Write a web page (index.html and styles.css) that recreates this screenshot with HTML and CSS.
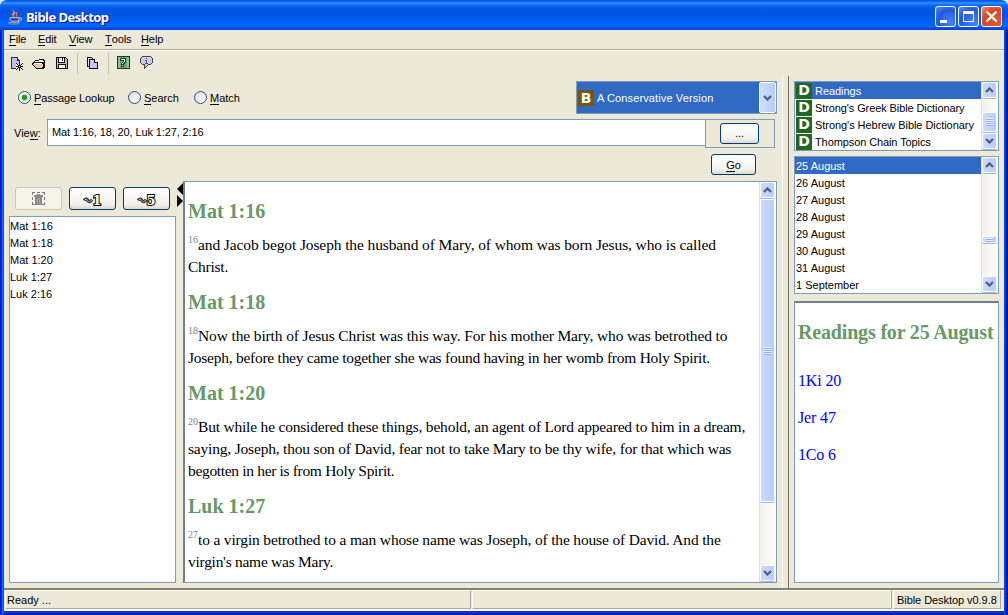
FILE: index.html
```html
<!DOCTYPE html>
<html lang="en">
<head>
<meta charset="utf-8">
<title>Bible Desktop</title>
<link rel="stylesheet" href="styles.css">
</head>
<body>
<svg class="defs" width="0" height="0">
  <symbol id="up" viewBox="0 0 9 6"><path d="M1 5 4.500 1.500 8 5" fill="none" stroke="#4d6185" stroke-width="2.300"/></symbol>
  <symbol id="down" viewBox="0 0 9 6"><path d="M1 1 4.500 4.500 8 1" fill="none" stroke="#4d6185" stroke-width="2.300"/></symbol>
</svg>
<div class="window">
  <header class="titlebar">
    <svg class="logo" width="16" height="16" viewBox="0 0 16 16"><path d="M7 8C3 5 9 4 6 1M9 8c2-2-1-3 1-5" fill="none" stroke="#f26a3c" stroke-width="1.500"/><path d="M6 6 8 3" stroke="#ffd0a8"/><path d="M3 8.500h9v2.500l-2 2H5l-2-2z" fill="#5673b4" stroke="#b5c4e8" stroke-width=".8"/><path d="M12 9h2.500v2L11 12.500" fill="none" stroke="#b5c4e8"/><path d="M1 13.500h12l-2 1.500H3z" fill="#52639e" stroke="#9fb0dd" stroke-width=".6"/><path d="M4 10.500h7" stroke="#24366e"/></svg>
    <span class="title">Bible Desktop</span>
    <div class="winbtns">
      <span class="wb"><svg width="19" height="19"><path d="M4 13h7v3H4z" fill="#fff"/></svg></span>
      <span class="wb"><svg width="19" height="19"><path d="M4.500 5.500h10v9h-10zM4 5h11" fill="none" stroke="#fff"/><path d="M4 4h11v3H4z" fill="#fff"/></svg></span>
      <span class="wb close"><svg width="19" height="19"><path d="M4.500 4.500l10 10m0-10-10 10" stroke="#fff" stroke-width="2.300"/></svg></span>
    </div>
  </header>
  <nav class="menu"><span class="m1"><u>F</u>ile</span><span class="m2"><u>E</u>dit</span><span class="m3"><u>V</u>iew</span><span class="m4"><u>T</u>ools</span><span class="m5"><u>H</u>elp</span></nav>
  <div class="toolbar">
    <svg width="150" height="24" viewBox="0 0 150 24" shape-rendering="crispEdges">
      <path d="M1 5h7l2 3v8H1z" fill="#fff"/><path d="M2 6h5v3h2v3H6v4H2z" fill="#bcc0ef"/><path d="M6 16.500H1.500V5.500H7l2.500 3V10M7.500 5.500v3h2" fill="none" stroke="#333"/><path d="M6 11h1v1h1v1h1v-3h1v3h1v-1h1v-1h1v1h-1v1h-1v1h2v1h-2v1h1v1h1v1h-1v-1h-1v-1h-1v3H9v-3H8v1H7v1H6v-1h1v-1h1v-1H6v-1h2v-1H7v-1H6z" fill="#111"/><path d="M9 14h1v1H9z" fill="#fff"/>
      <path d="M23 10h1V9h1V8h4V7h5v1h1v8h-1v1h-8v-1h-1v-1h-1v-1h-1v-1h-1z" fill="#111"/><path d="M26 9h3V8h4v1h1v1H25v-1z" fill="#fff2df"/><path d="M24 11h8v1h1v3h-1v1h-6v-1h-1v-1h-1v-1h-1v-1h1z" fill="#e7c8a8"/><path d="M24 11h8v1h-8z" fill="#fff"/>
      <path d="M46.500 5.500h9l2 2v9h-11z" fill="#b9bcc8" stroke="#111"/><path d="M49 6h5v4h-5zM48 12h8v4h-8z" fill="#fff"/><path d="M48.500 6v4.500h6V6M48.500 16v-3.500h7V16M52.500 6v3" fill="none" stroke="#111"/>
      <path d="M67.500 1v21M98.500 1v21" stroke="#c5c2b0"/>
      <path d="M77.500 5.500h4l2 2v7h-6z" fill="#d9daff" stroke="#111"/><path d="M79.500 7.500h5l3 3v6h-8z" fill="#c5c8f4" stroke="#111"/><path d="M84.500 7.500v3h3" fill="#fff" stroke="#111"/>
      <path d="M107.500 4.500h12v12h-12z" fill="#72a778" stroke="#163b20"/><path d="M108 5h2v11h-2zm9 0h2v11h-2z" fill="#93be98"/><path d="M110 6h6v5h-1v1h-1v3h-3v-4h1v-1h1V9h-3z" fill="#1b4725"/><path d="M111 7h4v3h-1v1h-1v1h-1v-1h1v-1h1V8h-3zm1 6h1v1h-1z" fill="#e3f0e3"/>
      <path d="M132.500 4.500h8l2 2v4l-2 2h-2l-4 4v-4h-2l-2-2v-4z" fill="#c9cbed" stroke="#444"/><path d="M136 6h1v1h-1zm-1 2h2v3h1v1h-3v-1h1V9h-1z" fill="#556"/>
    </svg>
  </div>
  <main class="body">
    <section class="left">
      <div class="row1">
        <i class="radio on"></i><span class="r1"><u>P</u>assage Lookup</span>
        <i class="radio"></i><span class="r2"><u>S</u>earch</span>
        <i class="radio"></i><span class="r3"><u>M</u>atch</span>
        <div class="combo"><b class="badge bible">B</b><span>A Conservative Version</span><i class="drop"><svg width="9" height="6"><use href="#down"/></svg></i></div>
      </div>
      <div class="row2"><span class="vl">Vie<u>w</u>:</span><div class="field"><span>Mat 1:16, 18, 20, Luk 1:27, 2:16</span></div><div class="more"><span class="btn dots">...</span></div></div>
      <div class="row3"><span class="btn go"><span><u>G</u>o</span></span></div>
      <div class="split">
        <aside>
          <div class="tools">
            <span class="btn off"><svg width="16" height="16" viewBox="0 0 16 16" shape-rendering="crispEdges"><path d="M1 1h3v1H2v2H1zM6 1h3v1H6zM11 1h3v3h-1V2h-2zM1 6h1v3H1zM13 6h1v3h-1zM1 11h1v2h2v1H1zM13 11h1v3h-3v-1h2z" fill="#777"/><path d="M6 3h3v1h3v2h-1v8H4V6H3V4h3z" fill="#8b8b8b"/><path d="M6 7h1v5H6zm2 0h1v5H8z" fill="#aaa"/></svg></span>
            <span class="btn"><svg width="20" height="16"><path d="M1 9.500q2.500-3 4 0t4-1" class="t1"/><path d="M1 9.500q2.500-3 4 0t4-1" class="t2"/><text x="9.500" y="13.500" class="num">1</text></svg></span>
            <span class="btn"><svg width="20" height="16"><path d="M1 9.500q2.500-3 4 0t4-1" class="t1"/><path d="M1 9.500q2.500-3 4 0t4-1" class="t2"/><text x="9.500" y="13.500" class="num">5</text></svg></span>
          </div>
          <ul class="list verses"><li>Mat 1:16</li><li>Mat 1:18</li><li>Mat 1:20</li><li>Luk 1:27</li><li>Luk 2:16</li></ul>
        </aside>
        <div class="sash"><svg width="6" height="26"><path d="M6 2v12L0 8zM0 14v12l6-6z" fill="#000"/></svg></div>
        <div class="reader">
          <article>
            <h2>Mat 1:16</h2>
            <p><sup>16</sup><span class="a1">and Jacob begot Joseph the husband of Mary, of whom was born Jesus, who is called</span><br><span class="a2">Christ.</span></p>
            <h2>Mat 1:18</h2>
            <p><sup>18</sup><span class="a3">Now the birth of Jesus Christ was this way. For his mother Mary, who was betrothed to</span><br><span class="a4">Joseph, before they came together she was found having in her womb from Holy Spirit.</span></p>
            <h2>Mat 1:20</h2>
            <p><sup>20</sup><span class="a5">But while he considered these things, behold, an agent of Lord appeared to him in a dream,</span><br><span class="a6">saying, Joseph, thou son of David, fear not to take Mary to be thy wife, for that which was</span><br><span class="a7">begotten in her is from Holy Spirit.</span></p>
            <h2>Luk 1:27</h2>
            <p><sup>27</sup><span class="a8">to a virgin betrothed to a man whose name was Joseph, of the house of David. And the</span><br><span class="a9">virgin's name was Mary.</span></p>
          </article>
          <div class="scroll"><i class="arrow"><svg width="9" height="6"><use href="#up"/></svg></i><i class="thumb big"><b></b></i><i class="arrow end"><svg width="9" height="6"><use href="#down"/></svg></i></div>
        </div>
      </div>
    </section>
    <div class="divider"></div>
    <section class="right">
      <div class="box dicts">
        <ul class="list"><li class="sel"><b class="badge">D</b><span>Readings</span></li><li><b class="badge">D</b><span class="d2">Strong's Greek Bible Dictionary</span></li><li><b class="badge">D</b><span class="d3">Strong's Hebrew Bible Dictionary</span></li><li><b class="badge">D</b><span class="d4">Thompson Chain Topics</span></li></ul>
        <div class="scroll"><i class="arrow"><svg width="9" height="6"><use href="#up"/></svg></i><i class="thumb t-dict"><b></b></i><i class="arrow end"><svg width="9" height="6"><use href="#down"/></svg></i></div>
      </div>
      <div class="box dates">
        <ul class="list"><li class="sel">25 August</li><li>26 August</li><li>27 August</li><li>28 August</li><li>29 August</li><li>30 August</li><li>31 August</li><li>1 September</li></ul>
        <div class="scroll"><i class="arrow"><svg width="9" height="6"><use href="#up"/></svg></i><i class="thumb t-date"><b></b></i><i class="arrow end"><svg width="9" height="6"><use href="#down"/></svg></i></div>
      </div>
      <div class="readings"><h2>Readings for 25 August</h2><a>1Ki 20</a><a>Jer 47</a><a>1Co 6</a></div>
    </section>
  </main>
  <footer class="status"><span class="s1">Ready ...</span><span class="s2"></span><span class="s3">Bible Desktop v0.9.8</span></footer>
</div>
</body>
</html>
```
FILE: styles.css
```css
* { box-sizing: border-box; }
body { margin: 0; width: 1008px; height: 615px; overflow: hidden; background: #d8e4f8; font: 11px/17px "Liberation Sans", Arial, sans-serif; color: #000; }
.defs { position: absolute; }
svg { display: block; flex: none; }
i { font-style: normal; }
u { text-decoration: none; border-bottom: 1px solid #000; display: inline-block; line-height: 12px; }
.window { width: 1008px; height: 615px; display: flex; flex-direction: column; background: linear-gradient(90deg, #0019cf 0 1px, #0831d9 1px 2px, #166aee 2px 3px, #0855dd 3px 4px, #ece9d8 4px 1004px, #0048f1 1004px 1005px, #0037dc 1005px 1006px, #001da0 1006px 1007px, #00138c 1007px); border-radius: 7px 7px 0 0; overflow: hidden; }
.titlebar { height: 30px; flex: none; display: flex; align-items: center; padding: 3px 6px 0 7px; background: linear-gradient(#0058e6 0, #0058e6 1px, #3a93ff 3px, #0a6cf5 5px, #0055e5 9px, #0054e3 15px, #0061fb 22px, #0066ff 26px, #0053e0 28px, #003dd7 30px); }
.title { font: bold 13px/18px "Noto Sans", "Open Sans", sans-serif; color: #fff; letter-spacing: -.55px; margin-left: 3px; flex: 1; text-shadow: 1px 1px #0f1089; }
.winbtns { display: flex; gap: 2px; }
.wb { width: 21px; height: 21px; border: 1px solid #fff; border-radius: 3px; background: radial-gradient(circle at 75% 80%, #4c83ff, #2358df 60%, #5c8cf5); }
.close { background: radial-gradient(circle at 75% 80%, #e2582e, #dc4722 60%, #ed8d73); }
.menu { height: 21px; flex: none; display: flex; padding: 1px 0 0 5px; margin: 0 4px; border-bottom: 1px solid #fff; box-shadow: inset 0 -1px #aca899; letter-spacing: -.1px; }
.menu span { white-space: nowrap; }
.m1 { width: 29px; } .m2 { width: 31px; } .m3 { width: 36px; } .m4 { width: 36px; }
.toolbar { height: 25px; flex: none; padding: 1px 0 0 10px; }
.body { height: 512px; flex: none; display: flex; margin: 0 4px; }
.left { width: 778px; flex: none; padding: 5px; }
.row1 { height: 33px; width: 768px; display: flex; align-items: center; padding-left: 9px; }
.row1 > span { padding-top: 1px; }
.radio { width: 13px; height: 13px; border-radius: 50%; border: 1px solid #1d5281; background: linear-gradient(135deg, #dcdcd7, #fff); margin-right: 3px; flex: none; }
.on { background: radial-gradient(circle, #21a121 0 2.200px, #fff 3.500px); }
.r1 { width: 94px; letter-spacing: -.1px; } .r2 { width: 50px; } .r3 { flex: 1; }
.combo { width: 201px; height: 33px; border: 1px solid #7f9db9; background: #316ac5; color: #fff; display: flex; align-items: center; }
.combo > span { flex: 1; margin-left: 4px; padding-top: 1px; letter-spacing: .12px; }
.badge { width: 16px; height: 16px; background: #1e6823; color: #fff; font: bold 14px/15px "DejaVu Sans", sans-serif; text-align: center; flex: none; }
.dicts .badge { line-height: 14px; }
.bible { background: #79560f; margin-left: 1px; line-height: 16px; }
.combo .bible + span { margin-left: 3px; }
.drop { width: 17px; height: 31px; border: 1px solid #fff; border-radius: 2px; background: linear-gradient(90deg, #d2deff, #b8ccfb); display: grid; place-items: center; }
.row2 { display: flex; margin-top: 5px; height: 29px; }
.vl { width: 38px; padding: 6px 0 0 5px; }
.field { width: 659px; height: 27px; background: #fff; border: 1px solid #7f9db9; padding: 4px 4px; letter-spacing: -.12px; }
.more { width: 70px; height: 29px; border: 1px solid #7f9db9; margin-left: -1px; padding: 3px 0 0 14px; }
.btn { display: grid; place-items: center; border: 1px solid #003c74; border-radius: 3px; background: linear-gradient(#fff, #f3f3ee 75%, #dcd8cc); line-height: 15px; }
.dots { width: 39px; height: 21px; }
.row3 { height: 33px; padding: 6px 0 0 702px; }
.go { width: 45px; height: 21px; padding-top: 1px; }
.split { display: flex; height: 402px; }
aside { width: 168px; flex: none; padding-top: 6px; }
.tools { display: flex; gap: 7px; padding-left: 6px; margin-bottom: 6px; }
.tools .btn { width: 47px; height: 23px; }
.tools .off { border-color: #c9c7ba; background: #f5f4ea; }
.num { font: bold 13px "DejaVu Serif", serif; fill: #fff; stroke: #000; stroke-width: 2px; paint-order: stroke; }
.t1 { fill: none; stroke: #223; stroke-width: 3; }
.t2 { fill: none; stroke: #ccd; stroke-width: 1; }
.list { list-style: none; margin: 0; padding: 0; background: #fff; flex: 1; min-width: 0; }
.list li { height: 17px; display: flex; align-items: center; white-space: nowrap; }
.verses { width: 167px; height: 367px; border: 1px solid #7f9db9; padding-top: 1px; }
.sash { width: 6px; flex: none; }
.reader { width: 594px; height: 402px; flex: none; display: flex; border: 1px solid #7f9db9; border-left: 2px solid #6d7f91; background: #fff; }
article { flex: 1; min-width: 0; padding: 5px 0 0 3px; font: 15.5px/22px "Liberation Serif", "Times New Roman", serif; white-space: nowrap; }
h2 { font: bold 20px/24px "Liberation Serif", "Times New Roman", serif; color: #669966; margin: 12px 0 11px; white-space: nowrap; }
article p { margin: 0; height: 44px; }
article p:nth-of-type(3) { height: 66px; }
.a1 { letter-spacing: -.115px; }
.a2 { letter-spacing: -.25px; }
.a3 { letter-spacing: -.13px; }
.a4 { letter-spacing: -.255px; }
.a5 { letter-spacing: -.2px; }
.a6 { letter-spacing: -.19px; }
.a7 { letter-spacing: -.33px; }
.a8 { letter-spacing: -.165px; }
.a9 { letter-spacing: -.27px; }
sup { font-size: 10px; line-height: 0; color: #808080; vertical-align: 7px; }
.scroll { width: 17px; flex: none; display: flex; flex-direction: column; border-left: 1px solid #e1dfd8; background: linear-gradient(90deg, #f3f1ec, #fefefb); padding-right: 1px; }
.arrow, .thumb { background: linear-gradient(90deg, #cbd9fe, #b9cdfb); border: 1px solid #fff; border-radius: 2px; display: grid; place-items: center; flex: none; box-shadow: 0 1px #9fb6e0; }
.arrow { height: 16px; }
.end { margin-top: auto; margin-bottom: 1px; }
.thumb b { width: 7px; height: 8px; background: repeating-linear-gradient(#eef4fe 0 1px, #8cb0f8 1px 2px); }
.big { height: 303px; margin-top: 1px; }
.divider { width: 7px; flex: none; border-left: 1px solid #fbfaf4; border-right: 1px solid #716f64; }
.right { width: 215px; padding: 5px; }
.box { width: 205px; border: 1px solid #7f9db9; display: flex; background: #fff; }
.dicts { height: 70px; overflow: hidden; }
.dicts li { padding-left: 1px; }
.dates { height: 138px; margin-top: 5px; }
.dates li { padding: 1px 0 0 1px; }
.dicts li span { margin-left: 3px; padding-top: 1px; letter-spacing: -.05px; }
.dicts li .d2, .dicts li .d4 { letter-spacing: -.1px; }
.list .sel { background: #316ac5; color: #fff; }
.t-dict { height: 20px; margin-top: 14px; }
.t-date { height: 7px; margin-top: 63px; }
.t-date b { height: 4px; }
.readings { width: 205px; height: 282px; margin-top: 7px; background: #fff; border: 1px solid #7f9db9; border-top: 2px solid #6d7f91; padding: 5px 0 0 3px; font: 16px/22px "Liberation Serif", "Times New Roman", serif; }
.readings h2 { margin: 12px 0 26px; letter-spacing: -.17px; }
.readings a { display: block; color: #00f; height: 22px; margin-bottom: 15px; letter-spacing: -.15px; }
.status { height: 27px; flex: none; display: flex; gap: 1px; border-top: 2px solid #858275; margin: 0 4px; padding: 0 3px 0 1px; background: linear-gradient(#ece9d8 0 19px, #fff 19px 21px, #0831d9 21px 23px, #00138c 25px); }
.status span { height: 19px; border: 1px solid #aca899; border-top-color: #fff; border-left-color: #fff; padding: 1px 0 0 1px; white-space: nowrap; }
.s1 { width: 466px; } .s2 { width: 420px; } .status .s3 { width: 108px; padding-left: 3px; letter-spacing: -.06px; }
```
